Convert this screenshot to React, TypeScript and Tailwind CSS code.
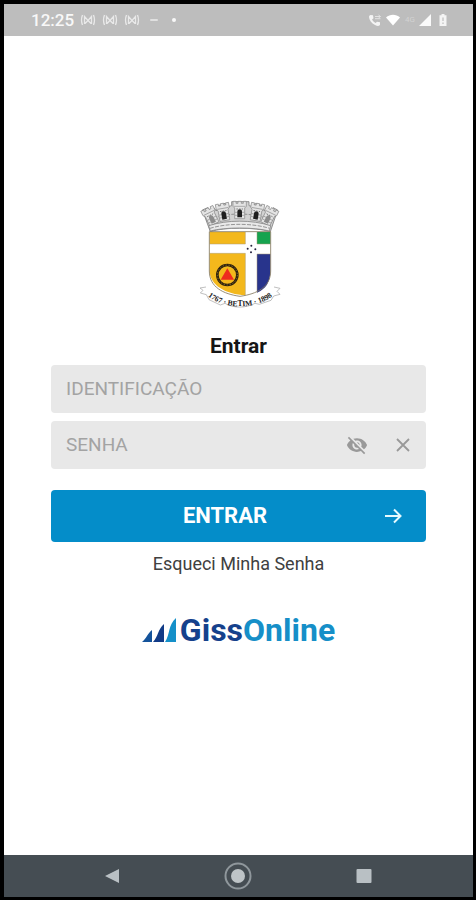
import React, { useState } from "react";

const crownTowers = [
  { x: 61, y: 68, rotate: -26, window: "#8c8c8c" },
  { x: 98, y: 56, rotate: -10, window: "#1f1f1f" },
  { x: 146, y: 50, rotate: 0, window: "#1f1f1f" },
  { x: 196, y: 56, rotate: 10, window: "#1f1f1f" },
  { x: 232, y: 68, rotate: 26, window: "#8c8c8c" },
];

const crossStars = [
  { x: 181, y: 152 },
  { x: 170, y: 161 },
  { x: 193, y: 163 },
  { x: 180, y: 172 },
];

const SignalGlyph = () => (
  <svg viewBox="0 0 16 12" className="h-3 w-4" fill="none" stroke="#e9e9e9" strokeWidth="1.3">
    <path d="M2.500 1C1.300 4 1.300 8 2.500 11M13.500 1c1.200 3 1.200 7 0 10" />
    <path d="M4.500 10V2.500l3.500 4 3.500-4V10M5 9.500l3-3 3 3" />
  </svg>
);

const StatusBar = () => (
  <div className="flex h-8 items-center justify-between bg-[#bdbdbd] pl-[27px] pr-[26px] text-[#f8f8f8]">
    <div className="flex items-center">
      <span className="mr-1.5 text-[17px] font-medium leading-5">12:25</span>
      <div className="flex items-center gap-1.5">
        <SignalGlyph />
        <SignalGlyph />
        <SignalGlyph />
      </div>
      <span className="ml-2.5 h-0.5 w-2 rounded-full bg-[#e0e0e0]"></span>
      <span className="ml-3.5 size-1 rounded-full bg-[#f8f8f8]"></span>
    </div>
    <div className="flex items-center">
      <svg viewBox="0 0 14 14" className="size-3.5" fill="#f4f4f4">
        <path d="M2.600 2 5 2.300l.5 3-1.500 1.300c.8 1.600 2 2.700 3.600 3.500L9 8.700l3 .6v2.500C11.500 13.200 9.500 13.300 7 12 3.500 10.300 1.200 7 1 4c0-1 .6-1.800 1.600-2Z" />
        <path d="M7 3.500h5.500M7 5.700h5.500M10.500 2l2 1.500-2 1.500" fill="none" stroke="#e2e2e2" />
      </svg>
      <svg viewBox="0 0 16 12" className="ml-[3px] h-3 w-4" fill="#fff">
        <path d="M1 3.500C5-.2 11-.2 15 3.500L8 11.500Z" />
      </svg>
      <span className="ml-1 text-[8px] leading-3 text-[#d2d2d2]">4G</span>
      <svg viewBox="0 0 12 12" className="ml-1 size-3" fill="#fafafa">
        <path d="M12 0v12H0Z" />
      </svg>
      <svg viewBox="0 0 8 12" className="ml-2 h-3 w-2" fill="#f4f4f4">
        <path d="M2.500 0h3v1.200H7.500V12H.5V1.200h2Z" />
        <path d="M4 3.500v3.500M4 8.500V10" stroke="#bdbdbd" strokeWidth="1.200" />
      </svg>
    </div>
  </div>
);

const CityCrest = () => (
  <svg viewBox="0 0 288 348" className="h-[116px] w-24" role="img" aria-label="Brasão do município">
    {/* Mural crown */}
    <path
      d="M34 45 50 38l8 8 12-6 6 8 6-16 20-7 8 10 12-3V20h52v12l12 3 8-10 20 7 6 16 6-8 12 6 8-8 14 7-22 65C190 96 100 96 58 110Z"
      fill="#d2d2d2"
      stroke="#7d7d7d"
      strokeWidth="2.500"
    />
    <path d="M46 78C104 50 188 50 246 78" fill="none" stroke="#8e8e8e" strokeWidth="3" strokeDasharray="9 4" />
    {crownTowers.map((tower) => (
      <g key={tower.x} transform={`translate(${tower.x} ${tower.y}) rotate(${tower.rotate})`}>
        <path d="M-20-31h9v6h6v-6h10v6h6v-6h9v15l-5 5v32h-30v-32l-5-5Z" fill="#e4e4e4" stroke="#848484" strokeWidth="2" />
        <path d="M-17-16h34M-14 2h7M7 2h7M-14 11h7M7 11h7" fill="none" stroke="#8c8c8c" strokeWidth="2" />
        <path d="M-7 17V1a7 8 0 0 1 14 0v16Z" fill={tower.window} />
        <path d="M-10-8h20" stroke="#6f6f6f" strokeWidth="2.500" strokeDasharray="5 3" />
      </g>
    ))}
    <path d="M53 92C110 74 182 74 239 92L235 108C190 96 100 96 58 108Z" fill="#e9e9e9" stroke="#858585" strokeWidth="2.500" />
    <path d="M57 100C110 84 182 84 236 100" fill="none" stroke="#959595" strokeWidth="3" strokeDasharray="12 4" />

    {/* Shield */}
    <path d="M55 110H239V228C239 276 198 297 147 304C96 297 55 276 55 228Z" fill="#fff" />
    <path d="M56 111H163V147H56Z" fill="#f3b81c" />
    <path d="M56 175H163V301C104 298 56 270 56 228Z" fill="#f3b81c" />
    <path d="M198 111H238V147H198Z" fill="#16a34f" />
    <path d="M198 177H238V228C238 262 224 282 198 293Z" fill="#28348c" />
    <path
      d="M55 110H239V228C239 276 198 297 147 304C96 297 55 276 55 228Z"
      fill="none"
      stroke="#83775c"
      strokeWidth="2.500"
    />
    <path d="M163 111v36H56M56 175H163V300M198 111v36H238M238 177H198V292" fill="none" stroke="#a99b76" strokeWidth="1.500" />
    {crossStars.map((star) => (
      <circle key={star.y} cx={star.x} cy={star.y} r="3" fill="#27243f" />
    ))}
    <circle cx="109" cy="240" r="30" fill="#f3b81c" stroke="#2c2110" strokeWidth="8" />
    <circle cx="109" cy="240" r="30" fill="none" stroke="#94701c" strokeWidth="3" strokeDasharray="4 5" />
    <path d="M109 220 129 254H89Z" fill="#ee2b1e" />

    {/* Ribbon with the motto */}
    <path
      d="M27 279 45 276C65 304 105 314 145 315C190 314 225 304 249 276L267 280 258 289 267 298 248 303 240 316 205 328 192 325C165 340 126 340 102 325L88 330 54 314 46 299 28 294 36 286Z"
      fill="#fff"
    />
    <path
      d="M45 276 27 279 36 286 28 294 46 299 54 314 88 330 102 325C126 340 165 340 192 325L205 328 240 316 248 303 267 298 258 289 267 280 249 276"
      fill="none"
      stroke="#a0a0a0"
      strokeWidth="2"
    />
    <path id="motto-line" d="M44 298C94 346 200 346 250 298" fill="none" />
    <text fontSize="23" fontWeight="700" fill="#222" className="font-['Liberation_Serif',serif]">
      <textPath href="#motto-line" startOffset="50%" textAnchor="middle">
        1767 · BETIM · 1898
      </textPath>
    </text>
  </svg>
);

const GissLogo = () => (
  <div className="flex items-center justify-center gap-1">
    <svg viewBox="0 0 34 24" className="h-6 w-[34px]" aria-hidden="true">
      <path d="M0 24C4 21 6 15 10 12V24Z" fill="#14539b" />
      <path d="M11 24C16 19 16 11 22 6V24Z" fill="#113b87" />
      <path d="M23 24C28 17 26 7 34 0V24Z" fill="#1590c9" />
    </svg>
    <span className="text-[32px] font-bold leading-9 text-[#15418c]">
      Giss<span className="text-[#168fc8]">Online</span>
    </span>
  </div>
);

const LoginForm: React.FC = () => {
  const [identification, setIdentification] = useState("");
  const [password, setPassword] = useState("");
  const [showPassword, setShowPassword] = useState(false);

  return (
    <form className="w-full" onSubmit={(e) => e.preventDefault()}>
      <h1 className="mb-[7px] text-center text-[21px] font-bold leading-6 text-[#151515]">Entrar</h1>

      <input
        type="text"
        aria-label="Identificação"
        placeholder="IDENTIFICAÇÃO"
        value={identification}
        onChange={(e) => setIdentification(e.target.value)}
        className="block h-12 w-full rounded bg-[#e8e8e8] px-[15px] pb-0.5 text-[19px] text-gray-800 outline-none placeholder:text-[#a3a3a3]"
      />

      <div className="mt-2 flex h-12 items-center rounded bg-[#e8e8e8] pl-[15px] pr-3">
        <input
          type={showPassword ? "text" : "password"}
          aria-label="Senha"
          placeholder="SENHA"
          value={password}
          onChange={(e) => setPassword(e.target.value)}
          className="h-12 min-w-0 flex-1 bg-transparent pb-0.5 text-[19px] text-gray-800 outline-none placeholder:text-[#a3a3a3]"
        />
        <button type="button" aria-label="Mostrar senha" onClick={() => setShowPassword(!showPassword)}>
          <svg viewBox="0 0 24 24" className="size-[22px]" fill="#999">
            <path d="M12 7c2.760 0 5 2.240 5 5 0 .65-.13 1.260-.36 1.830l2.920 2.920c1.510-1.260 2.700-2.890 3.430-4.750-1.730-4.390-6-7.500-11-7.500-1.400 0-2.740.25-3.980.7l2.160 2.160C10.740 7.130 11.350 7 12 7zM2 4.270l2.280 2.280.46.46C3.080 8.300 1.780 10.020 1 12c1.730 4.390 6 7.500 11 7.500 1.550 0 3.030-.3 4.380-.84l.42.42L19.730 22 21 20.730 3.270 3 2 4.270zM7.530 9.800l1.550 1.550c-.05.21-.08.43-.08.65 0 1.660 1.340 3 3 3 .22 0 .44-.03.65-.08l1.550 1.550c-.67.33-1.410.53-2.200.53-2.760 0-5-2.240-5-5 0-.79.2-1.530.53-2.200zm4.310-.78l3.150 3.150.02-.16c0-1.660-1.340-3-3-3l-.17.01z" />
          </svg>
        </button>
        <button type="button" aria-label="Limpar senha" className="ml-6" onClick={() => setPassword("")}>
          <svg viewBox="0 0 22 22" className="size-[22px]" fill="none" stroke="#999" strokeWidth="1.800">
            <path d="M5 5 17 17M17 5 5 17" />
          </svg>
        </button>
      </div>

      <button
        type="submit"
        className="mt-[21px] flex h-[52px] w-full items-center rounded bg-[#048dc9] pl-4 pr-[23px] text-white"
      >
        <span className="flex-1 text-center text-[22px] font-bold leading-7">ENTRAR</span>
        <svg viewBox="0 0 20 20" className="size-5" fill="none" stroke="#e6fbff" strokeWidth="2" aria-hidden="true">
          <path d="M2 10H17M11 3.500 17.500 10 11 16.500" />
        </svg>
      </button>

      <a href="#recuperar" className="mt-2.5 block text-center text-lg leading-6 text-[#404040]">
        Esqueci Minha Senha
      </a>
    </form>
  );
};

const NavigationBar = () => (
  <nav className="flex h-[42px] items-center justify-between bg-[#454d53] pl-[100px] pr-[101px]">
    <button type="button" aria-label="Voltar">
      <svg viewBox="0 0 16 16" className="size-4" fill="#b9c0c4">
        <path d="M1 8 15 1V15Z" />
      </svg>
    </button>
    <button type="button" aria-label="Início">
      <svg viewBox="0 0 28 28" className="size-7">
        <circle cx="14" cy="14" r="12.500" fill="none" stroke="#8f979c" strokeWidth="2" />
        <circle cx="14" cy="14" r="7" fill="#bec4c7" />
      </svg>
    </button>
    <button type="button" aria-label="Recentes">
      <svg viewBox="0 0 16 16" className="size-4" fill="#b9c0c4">
        <rect x=".5" y="1" width="15" height="14" rx="1" />
      </svg>
    </button>
  </nav>
);

const App: React.FC = () => {
  return (
    <div className="flex min-h-screen flex-col border-4 border-r-[3px] border-b-[3px] border-black bg-white font-[Roboto,sans-serif]">
      <StatusBar />
      <main className="flex flex-1 flex-col items-center px-[47px] pt-[159px]">
        <CityCrest />
        <div className="mt-[23px] w-full">
          <LoginForm />
        </div>
        <div className="mt-9">
          <GissLogo />
        </div>
      </main>
      <NavigationBar />
    </div>
  );
};

export default App;
